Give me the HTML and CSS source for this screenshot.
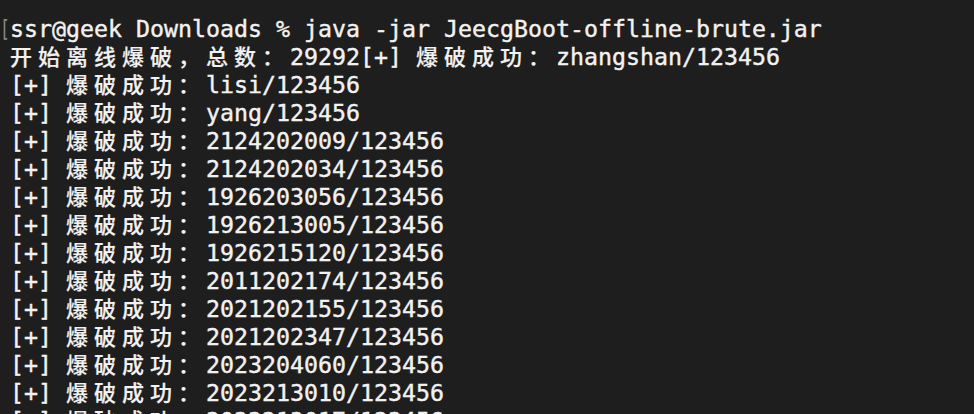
FILE: index.html
```html
<!DOCTYPE html>
<html lang="zh">
<head>
<meta charset="utf-8">
<link rel="stylesheet" href="styles.css">
<title>Terminal</title>
</head>
<body>
<div class="term">
  <div class="line"><span class="mark">[</span>ssr@geek Downloads % java -jar JeecgBoot-offline-brute.jar</div>
  <div class="line"><span class="c">开始离线爆破，总数：</span>29292[+] <span class="c">爆破成功：</span>zhangshan/123456</div>
  <div class="line">[+] <span class="c">爆破成功：</span>lisi/123456</div>
  <div class="line">[+] <span class="c">爆破成功：</span>yang/123456</div>
  <div class="line">[+] <span class="c">爆破成功：</span>2124202009/123456</div>
  <div class="line">[+] <span class="c">爆破成功：</span>2124202034/123456</div>
  <div class="line">[+] <span class="c">爆破成功：</span>1926203056/123456</div>
  <div class="line">[+] <span class="c">爆破成功：</span>1926213005/123456</div>
  <div class="line">[+] <span class="c">爆破成功：</span>1926215120/123456</div>
  <div class="line">[+] <span class="c">爆破成功：</span>2011202174/123456</div>
  <div class="line">[+] <span class="c">爆破成功：</span>2021202155/123456</div>
  <div class="line">[+] <span class="c">爆破成功：</span>2021202347/123456</div>
  <div class="line">[+] <span class="c">爆破成功：</span>2023204060/123456</div>
  <div class="line">[+] <span class="c">爆破成功：</span>2023213010/123456</div>
  <div class="line">[+] <span class="c">爆破成功：</span>2023213017/123456</div>
</div>
</body>
</html>
```
FILE: styles.css
```css
html, body {
  margin: 0;
  padding: 0;
  background: #1e1e1e;
  height: 100%;
  overflow: hidden;
}
.term {
  padding: 15px 0 0 10px;
  font-family: "DejaVu Sans Mono", "Liberation Mono", monospace;
  font-size: 23.25px;
  color: #f2f2f2;
  -webkit-text-stroke: 0.4px #f2f2f2;
}
.line {
  height: 28px;
  line-height: 28px;
  white-space: pre;
}
.c {
  font-family: "Noto Sans CJK SC", "Noto Sans", sans-serif;
  font-size: 22px;
  letter-spacing: 6px;
  line-height: 1;
  font-weight: 500;
  -webkit-text-stroke: 0.2px #f2f2f2;
}
.mark {
  display: inline-block;
  width: 0;
  color: #8a8a8a;
  font-weight: 300;
  -webkit-text-stroke: 0;
  transform: translateX(-10px) scaleX(0.7);
}
```
